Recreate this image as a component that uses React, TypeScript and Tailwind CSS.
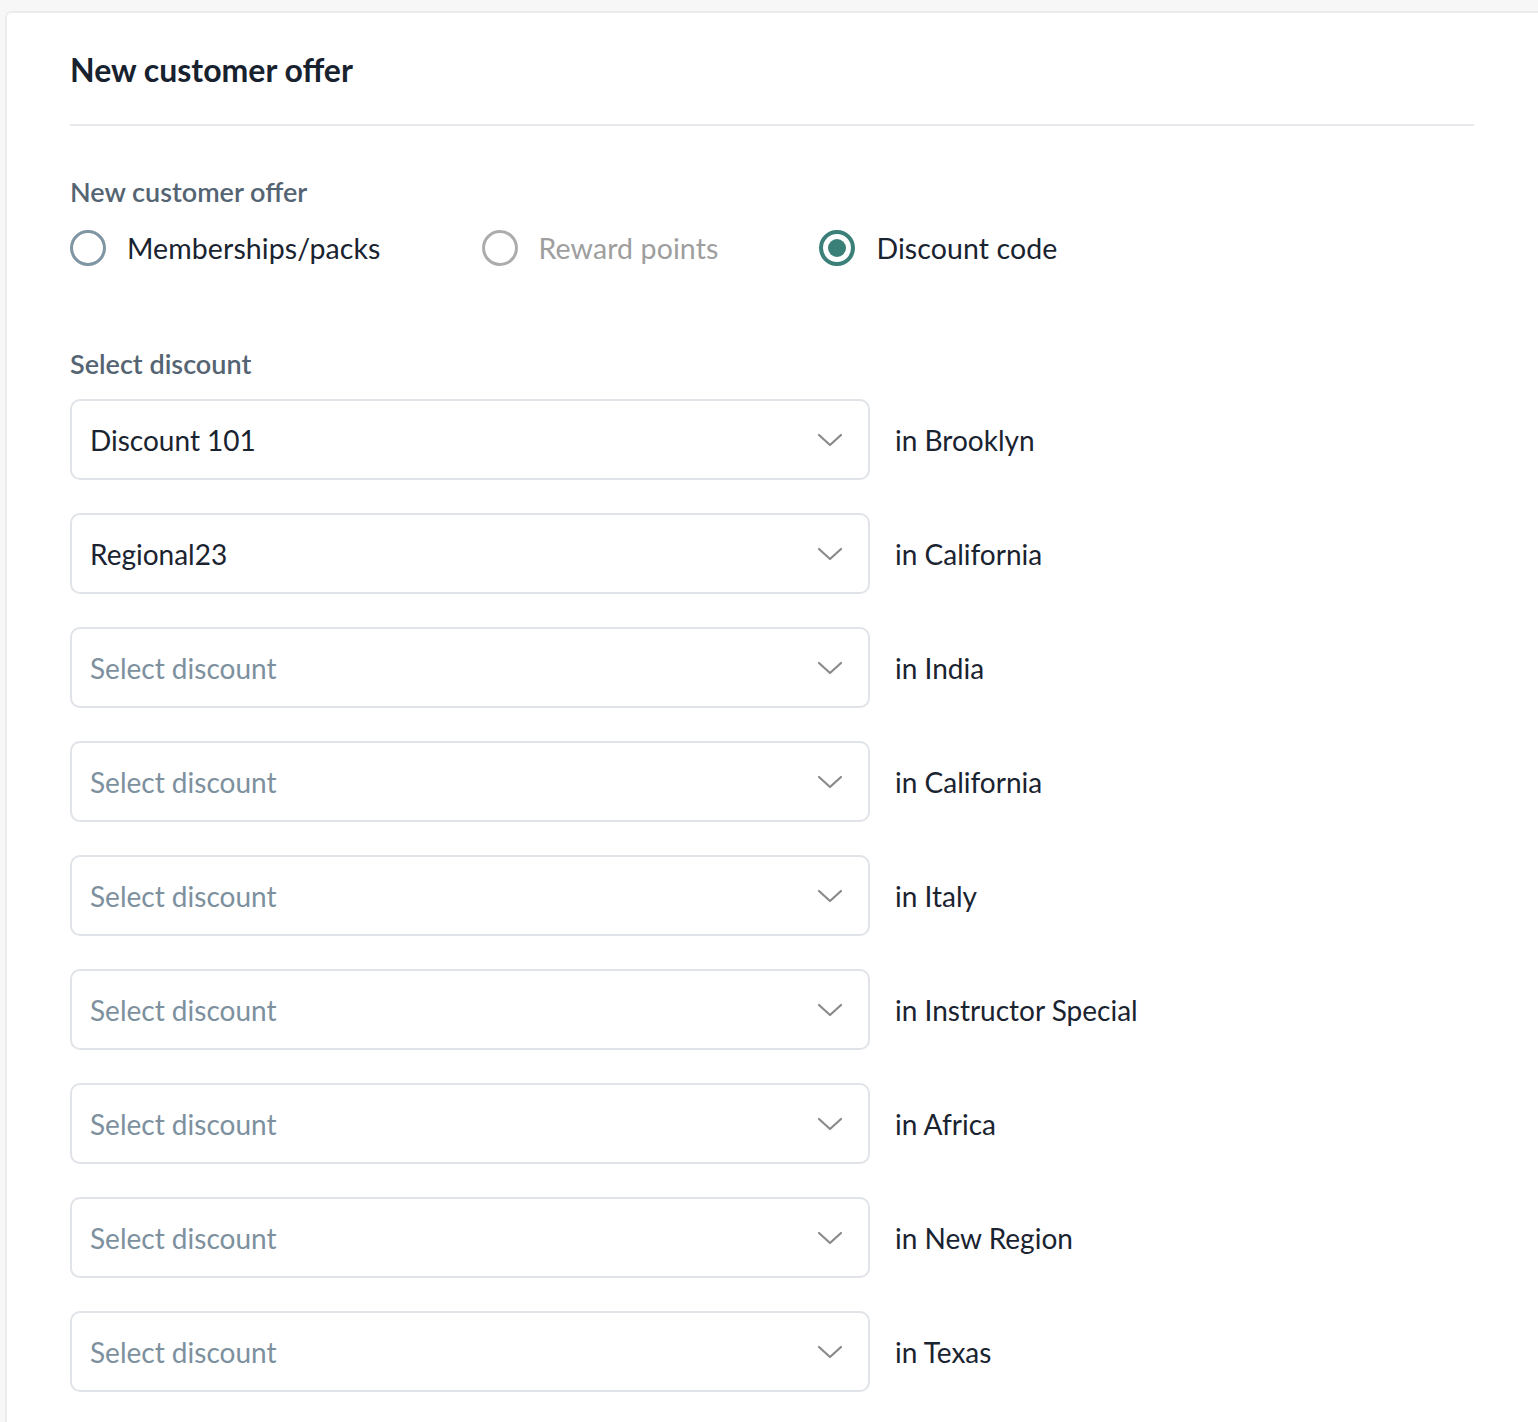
import React, { useState } from "react";

const rows = [
  { value: "Discount 101", region: "Brooklyn" },
  { value: "Regional23", region: "California" },
  { value: "", region: "India" },
  { value: "", region: "California" },
  { value: "", region: "Italy" },
  { value: "", region: "Instructor Special" },
  { value: "", region: "Africa" },
  { value: "", region: "New Region" },
  { value: "", region: "Texas" },
];

function Chevron() {
  return (
    <svg width="26" height="16" viewBox="0 0 26 16" fill="none">
      <path d="M2 3l11 10 11-10" stroke="#8a8a8a" strokeWidth="2.2" strokeLinecap="round" strokeLinejoin="round" />
    </svg>
  );
}

function Radio({ label, checked, disabled, onClick }: { label: string; checked?: boolean; disabled?: boolean; onClick?: () => void }) {
  return (
    <button
      type="button"
      onClick={disabled ? undefined : onClick}
      className="flex items-center gap-[21px] cursor-pointer"
    >
      {checked ? (
        <span className="w-[36px] h-[36px] rounded-full border-[4px] border-[#3a7f78] flex items-center justify-center">
          <span className="w-[18px] h-[18px] rounded-full bg-[#3a7f78]" />
        </span>
      ) : (
        <span className={`w-[36px] h-[36px] rounded-full border-[3.5px] ${disabled ? "border-[#acacac]" : "border-[#7f95a3]"}`} />
      )}
      <span className={`text-[28.5px] leading-none tracking-[0.1px] ${disabled ? "text-[#9e9e9e]" : "text-[#1a2330]"}`}>{label}</span>
    </button>
  );
}

export default function App() {
  const [offer, setOffer] = useState<'packs' | 'points' | 'code'>('code');

  return (
    <div className="min-h-[1422px] bg-[#f7f7f8] pt-[11px] pl-[5px] overflow-hidden" style={{ fontFamily: "Lato, 'Open Sans', sans-serif" }}>
      <div className="bg-white min-h-[1411px] w-[1545px] rounded-tl-[6px] rounded-tr-[10px] border-l-[2px] border-t-[2px] border-[#ececef] px-[63px] pt-[37px]">
        {/* Header */}
        <h1 className="text-[32px] font-bold text-[#18222f] leading-[40px]">New customer offer</h1>
        <div className="mt-[34px] h-[2px] bg-[#e8e9ec] w-[1404px]" />

        {/* Offer type */}
        <div className="mt-[49px] text-[27px] font-semibold text-[#556472] leading-[34px]">New customer offer</div>
        <div className="mt-[21px] flex items-center gap-[101px]">
          <Radio label="Memberships/packs" checked={offer === 'packs'} onClick={() => setOffer('packs')} />
          <Radio label="Reward points" disabled checked={offer === 'points'} />
          <Radio label="Discount code" checked={offer === 'code'} onClick={() => setOffer('code')} />
        </div>

        {/* Discount selects */}
        <div className="mt-[81px] text-[27px] font-semibold text-[#556472] leading-[34px]">Select discount</div>
        <div className="mt-[18px] flex flex-col gap-[33px]">
          {rows.map((r, idx) => (
            <div key={idx} className="flex items-center gap-[25px]">
              <div className="w-[800px] h-[81px] rounded-[10px] border-[2px] border-[#e0e3e8] flex items-center justify-between pl-[18px] pr-[25px]">
                <span className={`text-[28px] ${r.value ? "text-[#1a2330]" : "text-[#7d909e]"}`}>
                  {r.value || "Select discount"}
                </span>
                <Chevron />
              </div>
              <span className="text-[28px] text-[#1a2330]">in {r.region}</span>
            </div>
          ))}
        </div>
      </div>
    </div>
  );
}
